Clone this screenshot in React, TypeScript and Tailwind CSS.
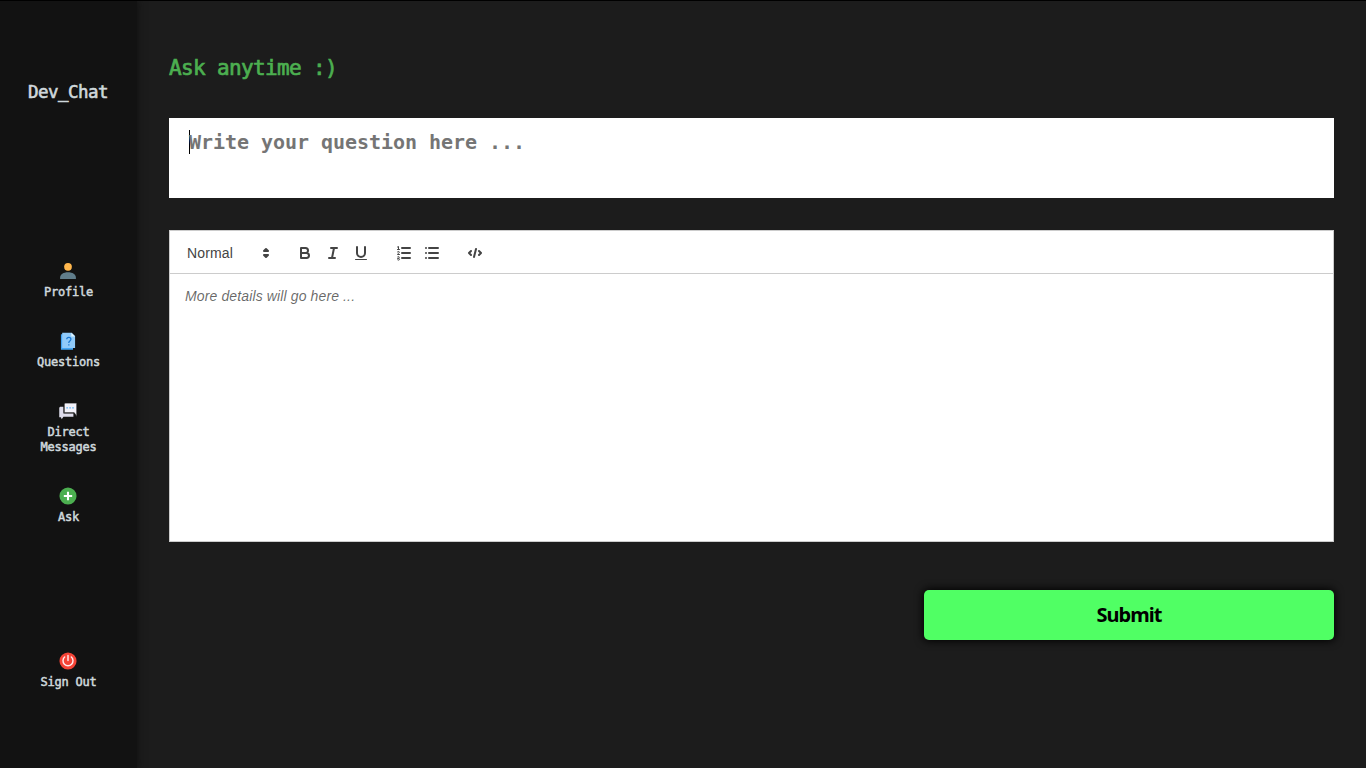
import type { ReactNode } from "react";

const MONO = "font-['DejaVu_Sans_Mono',monospace]";

function NavItem({ icon, lines, className = "" }: { icon: ReactNode; lines: string[]; className?: string }) {
  return (
    <a className={`flex flex-col items-center ${className}`}>
      <svg viewBox="0 0 48 48" className="h-5 w-5">{icon}</svg>
      <span className="mt-1 flex flex-col items-center pl-px text-[12px] leading-[15px] tracking-[-0.224px] text-[#cfd8dc] [-webkit-text-stroke:0.5px_#cfd8dc]">
        {lines.map((l) => <span key={l}>{l}</span>)}
      </span>
    </a>
  );
}

const profile = (
  <>
    <circle cx="24" cy="14" r="9.3" fill="#ffb74d" />
    <path fill="#607d8b" d="M5 43v-3c0-8 8-13 19-13s19 5 19 13v3z" />
  </>
);
const questions = (
  <>
    <path fill="#42a5f5" d="M7 8h5v32h24v5H7z" />
    <path fill="#90caf9" d="M10 4h23l8 8v29H10z" />
    <path fill="#e1f5fe" d="M32 4l9 9h-9z" />
    <path fill="none" stroke="#1976d2" strokeWidth="3" d="M21 20c0-6 10-6 10 0 0 4-5 4-5 8v1M26 32v3" />
  </>
);
const messages = (
  <>
    <path fill="#dddbea" d="M5 14h8v16h24v8H13l-4 6-2-5H3V16z" />
    <path fill="#f3f2fa" stroke="#121212" strokeWidth="1.5" d="M17 5h27q1 0 1 1v31l-6-9H15V7z" />
    <path fill="#64b5f6" d="M20 15h4v3h-4zM27 15h4v3h-4zM34 15h4v3h-4z" />
  </>
);
const ask = (
  <>
    <circle cx="24" cy="24" r="20.5" fill="#4caf50" />
    <path fill="#fff" d="M21.500 14h5v20h-5zM14 21.500h20v5H14z" />
  </>
);
const signOut = (
  <>
    <circle cx="24" cy="24" r="20.5" fill="#f44336" />
    <path fill="none" stroke="#ffebee" strokeWidth="3.5" strokeLinecap="round" d="M16 14.500a12 12 0 1 0 16 0M24 11v12" />
  </>
);

function ToolIcon({ children }: { children: ReactNode }) {
  return (
    <span className="flex h-6 w-7 items-center justify-center px-[5px]">
      <svg viewBox="0 0 18 18" className="h-[18px] w-[18px]" fill="none" stroke="#444" strokeWidth="2" strokeLinecap="round" strokeLinejoin="round">{children}</svg>
    </span>
  );
}

export default function App() {
  return (
    <div className="flex h-screen w-full overflow-hidden border-t border-black bg-[#1c1c1c]">
      <aside className={`z-10 flex w-[137px] shrink-0 flex-col items-center bg-[#121212] pr-px shadow-[0_0_8px_#0f0f0f] ${MONO}`}>
        <h1 className="mt-[79px] text-[17.5px] leading-6 tracking-[-0.535px] text-[#cfd8dc] [-webkit-text-stroke:0.6px_#cfd8dc]">Dev_Chat</h1>
        <nav className="mt-[157px] flex flex-col items-center gap-[31px]">
          <NavItem icon={profile} lines={["Profile"]} />
          <NavItem icon={questions} lines={["Questions"]} />
          <NavItem icon={messages} lines={["Direct", "Messages"]} />
          <NavItem icon={ask} lines={["Ask"]} />
        </nav>
        <NavItem icon={signOut} lines={["Sign Out"]} className="mt-[126px]" />
      </aside>
      <main className="flex flex-1 flex-col pr-8 pl-8">
        <h2 className={`mt-[53px] text-[21px] leading-[28px] tracking-[-0.64px] text-[#4caf50] [-webkit-text-stroke:0.7px_#4caf50] ${MONO}`}>Ask anytime :)</h2>
        <div className={`mt-[36px] flex h-20 items-start bg-white px-5 pt-3 text-[20px] leading-6 font-bold tracking-[-0.04px] text-[#757575] ${MONO}`}>
          <span className="h-6 w-px bg-black" />
          <span className="-ml-px">Write your question here ...</span>
        </div>
        <section className="mt-8 flex h-[312px] flex-col border border-[#ccc] bg-white font-['Liberation_Sans',sans-serif]">
          <div className="flex h-[43px] shrink-0 items-center border-b border-[#ccc] pt-px pl-[17px] text-[#444]">
            <span className="flex w-[89px] items-center justify-between pr-px text-[14px] font-medium tracking-[0.15px]">
              <span className="pt-px">Normal</span>
              <svg viewBox="0 0 18 18" className="h-[18px] w-[18px]" fill="#444" stroke="#444" strokeWidth="2" strokeLinecap="round" strokeLinejoin="round"><path d="M7 11l2 2 2-2zM7 7l2-2 2 2z" /></svg>
            </span>
            <span className="ml-[15px] flex">
              <ToolIcon><path d="M5 4h4.500a2.500 2.500 0 0 1 0 5H5zM5 9h5.500a2.500 2.500 0 0 1 0 5H5z" /></ToolIcon>
              <ToolIcon><path d="M7 4h6M5 14h6M8 14l2-10" /></ToolIcon>
              <ToolIcon><path d="M5 3v6a4 4 0 0 0 8 0V3" /><rect x="3" y="15" width="12" height="1" rx=".5" fill="#444" stroke="none" /></ToolIcon>
            </span>
            <span className="ml-[15px] flex">
              <ToolIcon>
                <path d="M7 4h8M7 9h8M7 14h8" />
                <path strokeWidth="1" d="M2.500 5.500h2M3.500 5.500v-3l-1 .5M4.500 10.500h-2c0-1.100 1.850-1.200 1.850-2.230 0-.8-1.100-1.160-1.850-.42M2.500 14.700c.9-.7 2-.2 2 .5 0 1-1.100 1.100-1.600.8M2.700 12.800c.8-.7 1.800-.1 1.500.8-.1.500-.6.700-1.200.7" />
              </ToolIcon>
              <ToolIcon><path d="M6 4h9M6 9h9M6 14h9M3 4h0M3 9h0M3 14h0" /></ToolIcon>
            </span>
            <span className="ml-[15px] flex">
              <ToolIcon><path d="M5 7L3 9l2 2M13 7l2 2-2 2M10 5L8 13" /></ToolIcon>
            </span>
          </div>
          <p className="px-[15px] pt-3 text-[14px] leading-5 tracking-[0.125px] text-black/60 italic">More details will go here ...</p>
        </section>
        <button className="mt-12 h-[50px] w-[410px] self-end rounded-[5px] bg-[#50ff64] pb-px font-['Noto_Sans',sans-serif] text-[20px] font-bold tracking-[-0.95px] text-black shadow-[0_0_8px_1px_#000]">Submit</button>
      </main>
    </div>
  );
}
